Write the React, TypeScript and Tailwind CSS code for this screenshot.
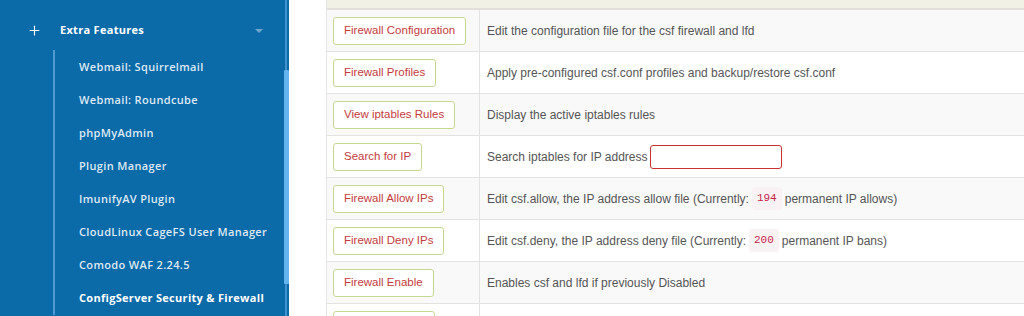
import { Plus } from "lucide-react";

const menuItems = [
  "Webmail: Squirrelmail",
  "Webmail: Roundcube",
  "phpMyAdmin",
  "Plugin Manager",
  "ImunifyAV Plugin",
  "CloudLinux CageFS User Manager",
  "Comodo WAF 2.24.5",
  "ConfigServer Security & Firewall",
];

type Row = { label: string; desc: React.ReactNode };

function Code({ children }: { children: React.ReactNode }) {
  return (
    <code className="mx-[3px] rounded-[3px] bg-[#f9f2f4] px-[5px] py-[3px] font-['Liberation_Mono',monospace] text-[11px] text-[#c7254e]">
      {children}
    </code>
  );
}

const rows: Row[] = [
  { label: "Firewall Configuration", desc: "Edit the configuration file for the csf firewall and lfd" },
  { label: "Firewall Profiles", desc: "Apply pre-configured csf.conf profiles and backup/restore csf.conf" },
  { label: "View iptables Rules", desc: "Display the active iptables rules" },
  {
    label: "Search for IP",
    desc: (
      <span className="flex items-center">
        Search iptables for IP address
        <input className="ml-[2px] h-[24px] w-[132px] rounded-[3px] border border-[#c9302c] bg-white outline-none" />
      </span>
    ),
  },
  {
    label: "Firewall Allow IPs",
    desc: (
      <>
        Edit csf.allow, the IP address allow file (Currently: <Code>194</Code> permanent IP allows)
      </>
    ),
  },
  {
    label: "Firewall Deny IPs",
    desc: (
      <>
        Edit csf.deny, the IP address deny file (Currently: <Code>200</Code> permanent IP bans)
      </>
    ),
  },
  { label: "Firewall Enable", desc: "Enables csf and lfd if previously Disabled" },
  { label: "Firewall Restart", desc: "Restart the csf iptables firewall" },
];

function Sidebar() {
  return (
    <div className="flex h-[316px] w-[289px] shrink-0 bg-[#0b6aa8] font-['Open_Sans',sans-serif]">
      <div className="flex-1">
        {/* Section header */}
        <div className="flex h-[50px] items-center pt-[10px]">
          <Plus className="ml-[27px] h-[15px] w-[15px] text-white" strokeWidth={1.8} aria-hidden="true" />
          <span className="ml-[18px] text-[11px] font-bold tracking-[0.3px] text-white">Extra Features</span>
          <span className="ml-auto mr-[20px] mt-[1px] h-0 w-0 border-x-[4px] border-t-[4px] border-x-transparent border-t-[#6fa6cf]" />
        </div>
        {/* Sub menu */}
        <div className="ml-[53px] border-l-2 border-[#4f9bd2] pt-[1px]">
          {menuItems.map((item, i) => (
            <div
              key={item}
              className={
                i === menuItems.length - 1
                  ? "flex h-[33px] items-center pl-[24px] text-[11px] font-bold tracking-[0.3px] text-white"
                  : "flex h-[33px] items-center pl-[24px] text-[11px] font-semibold tracking-[0.35px] text-[#dde9f4]"
              }
            >
              {item}
            </div>
          ))}
        </div>
      </div>
      {/* Scrollbar */}
      <div className="flex w-[6px] flex-col items-center">
        <div className="h-[70px] w-[2px] bg-[#3f92cc]" />
        <div className="h-[214px] w-[5px] rounded-[1px] bg-[#62b3ee]" />
        <div className="w-[2px] flex-1 bg-[#3f92cc]" />
      </div>
    </div>
  );
}

export default function App() {
  return (
    <div className="flex h-[316px] w-[1024px] overflow-hidden bg-white">
      <Sidebar />
      <div className="ml-[37px] flex-1 border-l border-[#e6e6e6] font-['Liberation_Sans',Arial,sans-serif] text-[12px] text-[#555]">
        <div className="h-[10px] border-b-2 border-[#e0e0d8] bg-[#f2f1e6]" />
        {rows.map((row, i) => (
          <div
            key={row.label}
            className={
              i % 2 === 0
                ? "flex h-[42px] border-b border-[#e3e3e3] bg-[#f9f9f9]"
                : "flex h-[42px] border-b border-[#e3e3e3] bg-white"
            }
          >
            <div className="flex w-[153px] shrink-0 items-center border-r border-[#e3e3e3] pl-[6px]">
              <button className="h-[28px] whitespace-nowrap rounded-[3px] border border-[#c4d98f] bg-white px-[10px] text-[11.5px] text-[#c43b3b]">
                {row.label}
              </button>
            </div>
            <div className="flex items-center whitespace-nowrap pl-[7px]">{row.desc}</div>
          </div>
        ))}
      </div>
    </div>
  );
}
